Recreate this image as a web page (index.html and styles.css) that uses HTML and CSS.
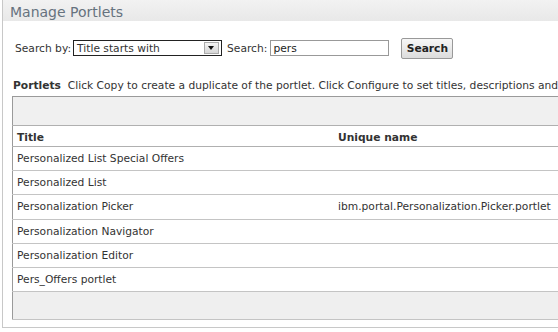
FILE: index.html
```html
<!DOCTYPE html>
<html lang="en">
<head>
    <meta charset="UTF-8">
    <title>Manage Portlets</title>
    <link rel="stylesheet" href="styles.css">
</head>
<body>
<div class="portlet">
    <div class="portlet-title">Manage Portlets</div>
    <div class="portlet-body">
        <form class="search-row">
            <label for="search-by">Search by:</label>
            <div class="select" id="search-by">
                <span class="select-text">Title starts with</span>
                <span class="select-arrow"></span>
            </div>
            <label for="search-text" class="search-label">Search:</label>
            <input type="text" id="search-text" value="pers">
            <input type="button" class="search-btn" value="Search">
        </form>
        <p class="intro"><b>Portlets</b>&nbsp; Click Copy to create a duplicate of the portlet. Click Configure to set titles, descriptions and parameters.</p>
        <table class="portlets">
            <tr class="toolbar"><td colspan="2"></td></tr>
            <tr class="head">
                <th class="col-title">Title</th>
                <th>Unique name</th>
            </tr>
            <tr><td>Personalized List Special Offers</td><td></td></tr>
            <tr><td>Personalized List</td><td></td></tr>
            <tr><td>Personalization Picker</td><td>ibm.portal.Personalization.Picker.portlet</td></tr>
            <tr><td>Personalization Navigator</td><td></td></tr>
            <tr><td>Personalization Editor</td><td></td></tr>
            <tr><td>Pers_Offers portlet</td><td></td></tr>
            <tr class="footer"><td colspan="2"></td></tr>
        </table>
    </div>
</div>
</body>
</html>
```

FILE: styles.css
```css
body {
    font-family: "DejaVu Sans", Verdana, sans-serif;
    font-size: 10.7px;
    color: #333;
    background-color: #fff;
    margin: 0;
    padding: 0;
    overflow: hidden;
}

.portlet {
    margin-left: 2px;
    width: 620px;
    border-left: 1px solid #c8c8c8;
    border-bottom: 1px solid #c8c8c8;
}

.portlet-title {
    height: 18px;
    padding: 3px 0 0 7px;
    line-height: 18px;
    font-size: 14px;
    color: #66727e;
    background: linear-gradient(#f2f2f2, #e8e8e8);
}

.portlet-body {
    padding: 16px 0 7px 9px;
}

.search-row {
    display: flex;
    align-items: center;
    height: 22px;
    margin: 0 0 0 3px;
}

.select {
    display: flex;
    align-items: center;
    justify-content: space-between;
    width: 142px;
    height: 14px;
    margin-left: 2px;
    padding: 0 2px 0 3px;
    border: 1px solid #222;
    background-color: #fff;
}

.select-arrow {
    position: relative;
    width: 13px;
    height: 10px;
    border: 1px solid #aaa;
    background: linear-gradient(#f4f4f4, #d6d6d6);
}

.select-arrow::after {
    content: "";
    position: absolute;
    left: 3px;
    top: 3px;
    border-left: 3px solid transparent;
    border-right: 3px solid transparent;
    border-top: 4px solid #111;
}

.search-label {
    margin-left: 5px;
}

input[type="text"] {
    width: 113px;
    height: 14px;
    margin-left: 3px;
    padding: 0 2px;
    border: 1px solid #999;
    font-family: inherit;
    font-size: 10.7px;
    color: #222;
}

.search-btn {
    width: 52px;
    height: 21px;
    margin-left: 12px;
    padding: 0;
    border: 1px solid #999;
    border-radius: 2px;
    background: linear-gradient(#f7f7f7, #dcdcdc);
    font-family: inherit;
    font-size: 10.7px;
    font-weight: bold;
    color: #222;
}

.intro {
    margin: 20px 0 0 1px;
    white-space: nowrap;
}

.portlets {
    margin-top: 4px;
    width: 600px;
    border-collapse: collapse;
    border-left: 1px solid #9a9a9a;
    border-top: 1px solid #9a9a9a;
    border-bottom: 1px solid #b8b8b8;
}

.portlets td, .portlets th {
    padding: 0 4px;
    height: 23.2px;
    text-align: left;
    border-bottom: 1px solid #c4c4c4;
    white-space: nowrap;
}

.portlets .toolbar td {
    height: 28px;
    background-color: #f0f0f0;
    border-bottom: 1px solid #b0b0b0;
}

.portlets .head th {
    height: 18px;
    padding-top: 2px;
    font-weight: bold;
    border-bottom: 1px solid #b0b0b0;
}

.col-title {
    width: 313px;
}

.portlets .footer td {
    height: 27px;
    background-color: #efefef;
    border-top: 1px solid #b0b0b0;
}
```
